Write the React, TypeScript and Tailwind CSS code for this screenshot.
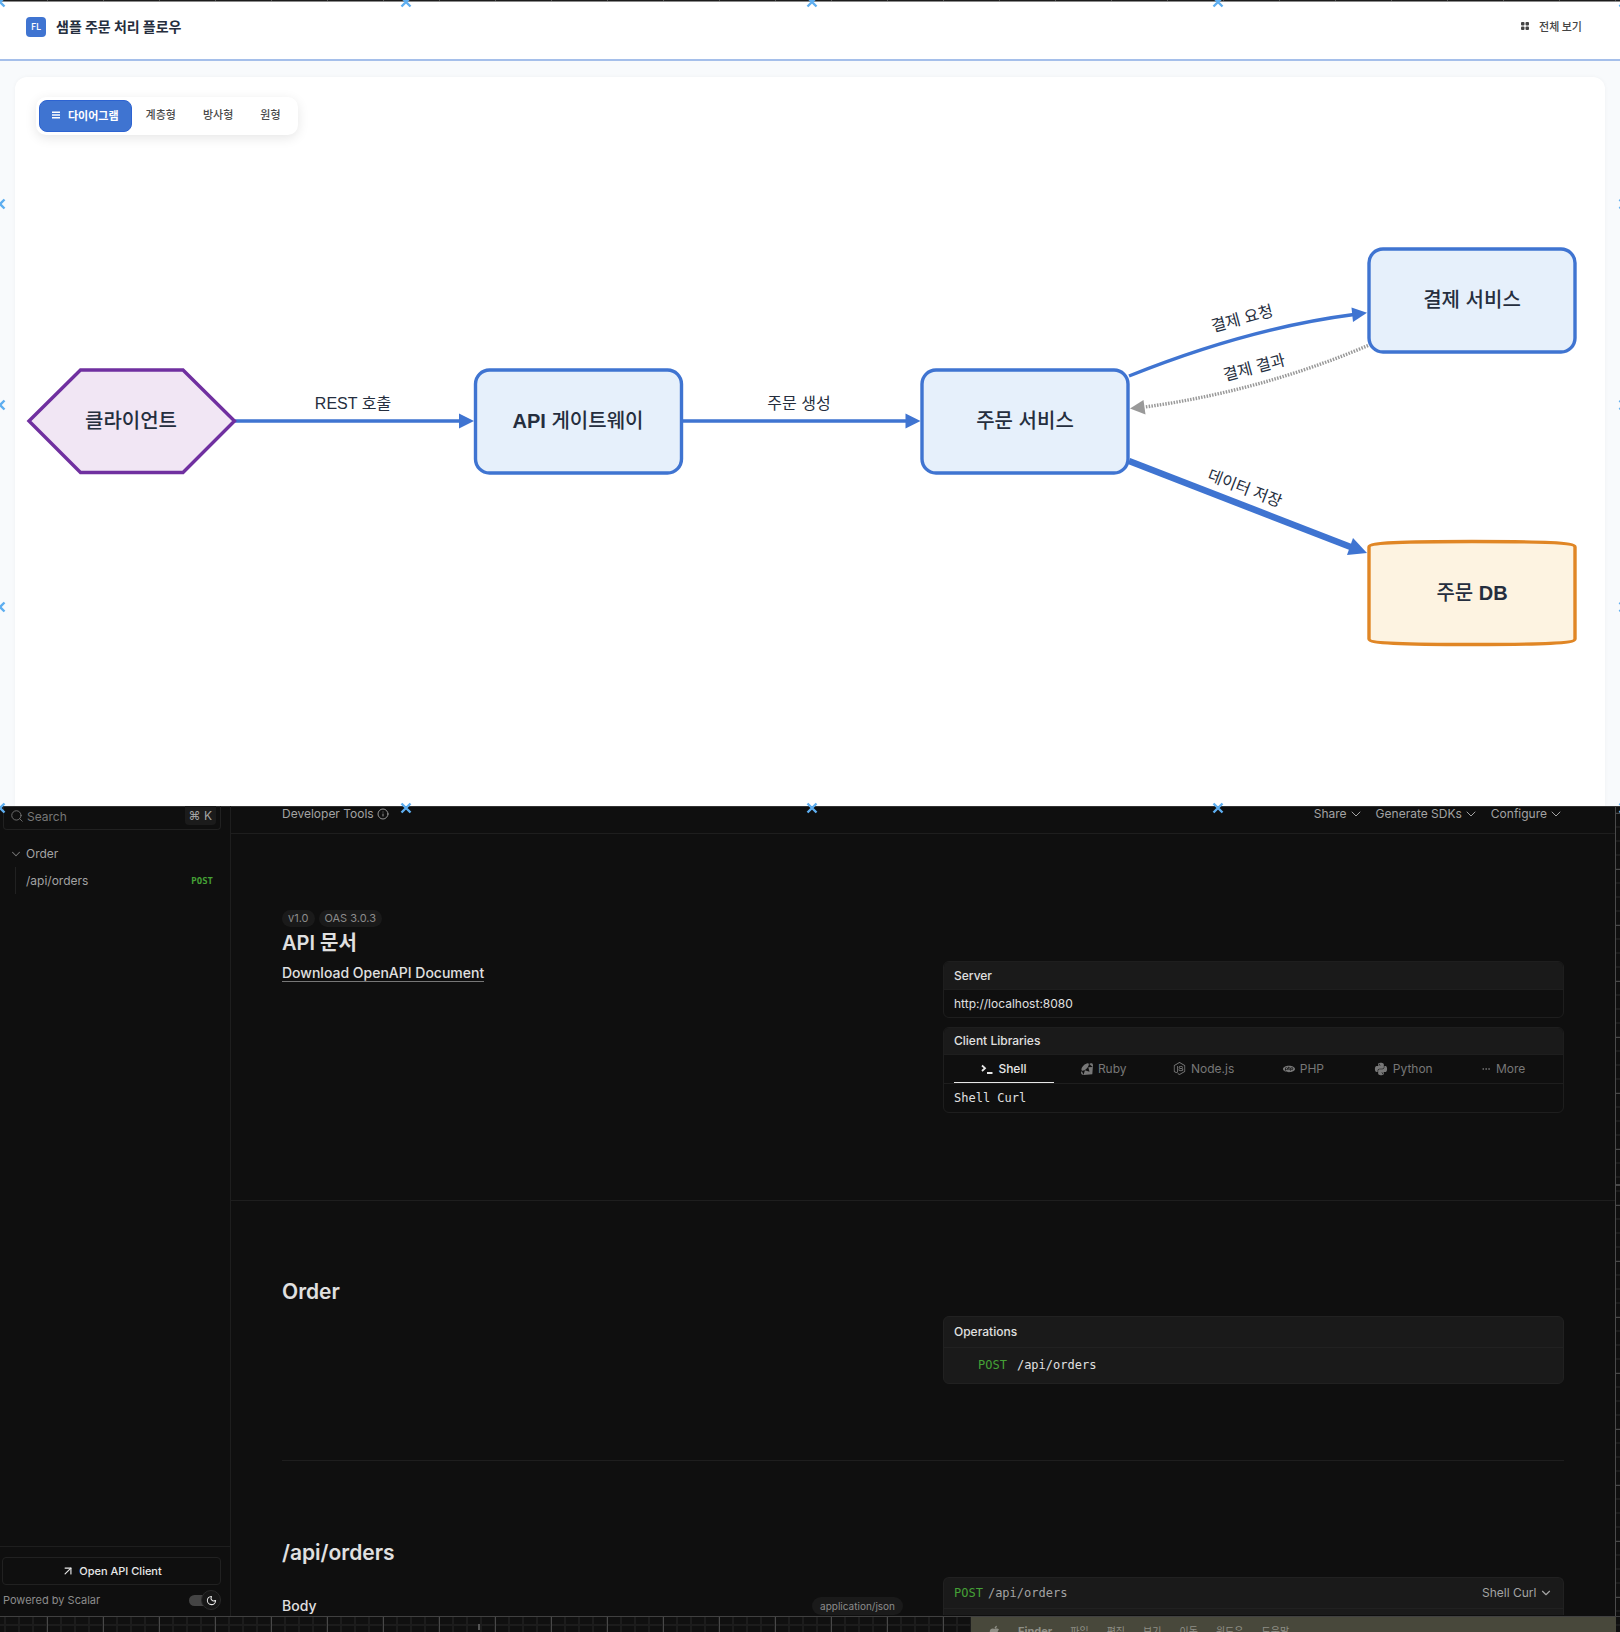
import { Search, ChevronDown, Info, ArrowUpRight, Moon, Ellipsis } from "lucide-react";
import { FaNodeJs, FaPython, FaApple } from "react-icons/fa";
import { SiRuby, SiPhp } from "react-icons/si";

const BLUE = "#3f74d1";

function Cross() {
  return (
    <span className="flex h-0 w-0 items-center justify-center">
      <svg width="12" height="12" viewBox="-6 -6 12 12" className="shrink-0">
        <path d="M-4.5-4.5 4.5 4.5M4.5-4.5-4.5 4.5" stroke="#5eaef0" strokeWidth="2.4" fill="none" />
      </svg>
    </span>
  );
}

/* Registration marks laid over the canvas edges */
function Marks() {
  return (
    <div aria-hidden className="pointer-events-none absolute top-0.5 -right-1 -bottom-0.5 left-0 z-10 flex flex-col justify-between">
      {[5, 2, 2, 2, 5].map((count, row) => (
        <div key={row} className="flex justify-between">
          {Array.from({ length: count }, (_, i) => (
            <Cross key={i} />
          ))}
        </div>
      ))}
    </div>
  );
}

function Diagram() {
  return (
    <svg
      viewBox="15 77 1590 729"
      className="block h-auto w-full font-['Liberation_Sans','Noto_Sans_CJK_KR',sans-serif]"
      role="img"
      aria-label="주문 처리 다이어그램"
    >
      <g fill="none" stroke={BLUE} strokeWidth="3.4">
        <path d="M235 421H461M683 421H907" />
        <path d="M1129 376Q1249 328 1354 314.5" />
        <path d="M1129 461 1352 547.5" strokeWidth="6.6" />
        <path d="M1368 345.5Q1261 391 1145 407" stroke="#999" strokeDasharray="1.5 1.3" />
      </g>
      <g fill={BLUE}>
        <path d="M459 413.5 474 421 459 428.5Z" />
        <path d="M905.5 413.5 920.5 421 905.5 428.5Z" />
        <path d="M1351.5 307.5 1367 312.7 1353 322Z" />
        <path d="M1353 538 1367 553 1347 555Z" />
        <path d="M1130 408.5 1143.5 400 1145.5 414.5Z" fill="#999" />
      </g>
      <g fill="#e6f0fb" stroke={BLUE} strokeWidth="3.4">
        <rect x="475.500" y="370" width="206" height="103" rx="14" />
        <rect x="922" y="370" width="206" height="103" rx="14" />
        <rect x="1369" y="249" width="206" height="103" rx="14" />
      </g>
      <path d="M29 421 80.5 370H183L234.5 421 183 472.5H80.5Z" fill="#f1e6f4" stroke="#7030a0" strokeWidth="3.4" />
      <path
        d="M1369 547C1369 543 1400 541.5 1472 541.5S1575 543 1575 547V639C1575 643 1544 644.5 1472 644.5S1369 643 1369 639Z"
        fill="#fdf3e1"
        stroke="#e08625"
        strokeWidth="3.4"
      />
      <g className="fill-[#252e3e] text-[20px] font-medium" textAnchor="middle">
        <text x="131" y="428">클라이언트</text>
        <text x="578" y="428"><tspan className="font-bold">API</tspan> 게이트웨이</text>
        <text x="1025" y="428">주문 서비스</text>
        <text x="1472" y="307">결제 서비스</text>
        <text x="1472" y="600">주문 <tspan className="font-bold">DB</tspan></text>
      </g>
      <g className="fill-[#252e3e] text-[16px]" textAnchor="middle">
        <text x="353" y="409">REST 호출</text>
        <text x="799" y="409">주문 생성</text>
        <text transform="translate(1242 318) rotate(-15)" y="6">결제 요청</text>
        <text transform="translate(1254 367) rotate(-15)" y="6">결제 결과</text>
        <text transform="translate(1245 488) rotate(21)" y="6">데이터 저장</text>
      </g>
    </svg>
  );
}

function FlowView() {
  return (
    <section className="relative bg-[#f8fafc] font-['Noto_Sans_CJK_KR',sans-serif]">
      <div className="h-0.5 border-b border-[#8a8a8a] bg-[#1c1c1c] bg-[repeating-linear-gradient(to_right,transparent_0_47px,#555_47px_48px,transparent_48px_56px)]" />
      <header className="flex h-[59px] items-start justify-between border-b-2 border-[#a5bfea] bg-white pt-3.5 pr-[38px] pl-[26px]">
        <div className="flex h-[22px] items-center gap-2.5">
          <span className="flex size-5 items-center justify-center rounded-sm bg-[#3f74d1] text-[9px] font-medium text-white">FL</span>
          <h1 className="pb-0.5 text-[14px] leading-5 font-bold text-[#252e3e]">샘플 주문 처리 플로우</h1>
        </div>
        <button className="flex h-5 items-center gap-2.5 text-[11px] font-medium text-[#444]">
          <svg width="8" height="8" viewBox="0 0 8 8" fill="currentColor">
            <rect width="3.5" height="3.5" rx="1" />
            <rect x="4.5" width="3.5" height="3.5" rx="1" />
            <rect y="4.5" width="3.5" height="3.5" rx="1" />
            <rect x="4.5" y="4.5" width="3.5" height="3.5" rx="1" />
          </svg>
          전체 보기
        </button>
      </header>
      <div className="px-[15px] pt-4">
        <div className="relative rounded-t-xl bg-white shadow-[0_0_4px_rgba(15,23,42,0.04)]">
          <Diagram />
          <nav className="absolute top-5 left-[21px] flex rounded-[10px] bg-white p-[3px] text-[11px] font-medium text-[#4a4a4a] shadow-[0_3px_12px_rgba(0,0,0,0.1)]">
            <button className="flex h-8 items-center gap-2 rounded-lg border border-[#2d63d2] bg-[#3f74d1] px-3 pb-0.5 font-bold text-white">
              <svg width="8" height="8" viewBox="0 0 8 8" fill="currentColor">
                <path d="M0 .5h8v1.5H0zM0 3.2h8v1.5H0zM0 6h8v1.5H0z" />
              </svg>
              다이어그램
            </button>
            <button className="px-3.5 pb-[3px]">계층형</button>
            <button className="px-[13px] pb-[3px]">방사형</button>
            <button className="px-3.5 pb-[3px]">원형</button>
          </nav>
        </div>
      </div>
      <Marks />
    </section>
  );
}

const menus = ["Share", "Generate SDKs", "Configure"];

const libraries = [
  {
    name: "Shell",
    icon: (
      <svg width="12" height="12" viewBox="0 0 12 12" fill="none" stroke="currentColor" strokeWidth="1.8">
        <path d="M1 2.5 4 5.2 1 8M6 10h5.5" />
      </svg>
    ),
  },
  { name: "Ruby", icon: <SiRuby size={12} /> },
  { name: "Node.js", icon: <FaNodeJs size={13} /> },
  { name: "PHP", icon: <SiPhp size={12} /> },
  { name: "Python", icon: <FaPython size={14} /> },
  { name: "More", icon: <Ellipsis size={10} /> },
];

function Sidebar() {
  return (
    <aside className="flex w-[231px] shrink-0 flex-col border-r border-[#1e1e1e] text-[#a3a3a3]">
      <div className="mr-[9px] ml-[3px] flex h-6 items-start gap-[3px] rounded-b-sm border-x border-b border-[#212121] pr-1 pl-1.5">
        <Search size={14} strokeWidth={1.5} className="mt-[3px] shrink-0 text-[#777]" />
        <input
          aria-label="Search"
          placeholder="Search"
          className="h-[21px] w-0 min-w-0 grow bg-transparent text-xs outline-none placeholder:text-[#777]"
        />
        <kbd className="h-[19px] rounded-b-sm bg-[#1b1b1b] px-1 font-[Inter,'DejaVu_Sans',sans-serif] text-xs leading-5">⌘ K</kbd>
      </div>
      <nav className="mt-[11px]">
        <button className="flex h-[26px] w-full items-center gap-[3px] pl-[9px]">
          <ChevronDown size={14} strokeWidth={1.8} className="text-[#777]" />
          Order
        </button>
        <a href="#orders" className="ml-[15px] flex h-[27px] items-center justify-between border-l border-[#212121] pr-[17px] pl-2.5">
          /api/orders
          <span className="font-['DejaVu_Sans_Mono',monospace] text-[9px] font-bold text-[#45a136]">POST</span>
        </a>
      </nav>
      <div className="mt-auto border-t border-[#1e1e1e] pt-2.5 pr-[9px] pb-1.5 pl-0.5">
        <button className="flex h-7 w-full items-center justify-center gap-1 rounded border border-[#212121] text-[11px] font-medium text-[#e7e7e7]">
          <ArrowUpRight size={14} strokeWidth={2} />
          Open API Client
        </button>
        <div className="mt-[5px] flex h-5 items-center justify-between">
          <a href="#scalar" className="pl-px text-[11px] text-[#8c8c8c]">Powered by Scalar</a>
          <label className="relative flex h-5 w-8 items-center">
            <input type="checkbox" role="switch" defaultChecked aria-label="Dark mode" className="h-[11px] w-6 appearance-none rounded-full bg-[#444]" />
            <span className="pointer-events-none absolute right-0 flex size-5 items-center justify-center rounded-full border border-[#2a2a2a] bg-[#161616] text-[#e7e7e7]">
              <Moon size={11} strokeWidth={2.2} />
            </span>
          </label>
        </div>
      </div>
    </aside>
  );
}

function Docs() {
  return (
    <main className="min-w-0 grow text-[#e0e0e0]">
      <div className="flex h-7 items-start justify-between border-b border-[#1e1e1e] px-[51px] text-[#a3a3a3]">
        <span className="flex h-[15px] items-center gap-[3px]">
          Developer Tools
          <Info size={12} strokeWidth={1.8} />
        </span>
        <div className="flex gap-3">
          {menus.map((m) => (
            <button key={m} className="flex h-[15px] items-center gap-px">
              {m}
              <ChevronDown size={16} strokeWidth={1.5} />
            </button>
          ))}
        </div>
      </div>

      <section className="grid grid-cols-2 gap-10 border-b border-[#1e1e1e] px-[51px] pt-[76px] pb-[87px]">
        <div>
          <div className="flex gap-1 text-[11px] leading-[17px] text-[#8c8c8c]">
            <span className="rounded-full bg-[#1a1a1a] px-[6px]">v1.0</span>
            <span className="rounded-full bg-[#1a1a1a] px-[6px]">OAS 3.0.3</span>
          </div>
          <h2 className="mt-1 text-[20px] leading-6 font-semibold">API 문서</h2>
          <a href="#openapi" className="mt-2.5 inline-block border-b border-[#777] text-[14px] leading-4 font-medium">
            Download OpenAPI Document
          </a>
        </div>
        <div className="flex flex-col gap-[9px] pt-[51px]">
          <div className="overflow-hidden rounded-md border border-[#1e1e1e]">
            <h3 className="border-b border-[#1e1e1e] bg-[#1a1a1a] px-2.5 leading-[27px] font-medium">Server</h3>
            <p className="px-2.5 leading-[27px]">http://localhost:8080</p>
          </div>
          <div className="overflow-hidden rounded-md border border-[#1e1e1e]">
            <h3 className="border-b border-[#1e1e1e] bg-[#1a1a1a] px-2.5 leading-[26px] font-medium">Client Libraries</h3>
            <div role="tablist" className="grid grid-cols-6 border-b border-[#1e1e1e] px-2.5 text-[#777]">
              {libraries.map(({ name, icon }, i) => (
                <button
                  key={name}
                  role="tab"
                  aria-selected={i === 0}
                  className="flex h-7 items-center justify-center gap-[5px] border-b border-transparent aria-selected:border-[#e7e7e7] aria-selected:font-medium aria-selected:text-[#e7e7e7]"
                >
                  {icon}
                  {name}
                </button>
              ))}
            </div>
            <p className="px-2.5 font-['DejaVu_Sans_Mono',monospace] leading-7">Shell Curl</p>
          </div>
        </div>
      </section>

      <section className="px-[51px] pt-[79px]">
        <h2 className="text-[21px] leading-6 font-semibold">Order</h2>
        <div className="grid grid-cols-2 gap-10 border-b border-[#1e1e1e] pt-3 pb-[76px]">
          <div className="col-start-2 rounded-md border border-[#212121] bg-[#1a1a1a]">
            <h3 className="border-b border-[#212121] px-2.5 leading-[30px] font-medium">Operations</h3>
            <a href="#orders" className="flex gap-2.5 px-[34px] font-['DejaVu_Sans_Mono',monospace] leading-[35px]">
              <span className="text-[#45a136]">POST</span>
              /api/orders
            </a>
          </div>
        </div>
      </section>

      <section id="orders" className="px-[51px] pt-20">
        <h2 className="text-[21px] leading-6 font-semibold">/api/orders</h2>
        <div className="grid grid-cols-2 gap-10 pt-3">
          <div className="mt-5 flex h-[18px] items-center justify-between">
            <h3 className="text-[14px] font-medium">Body</h3>
            <span className="rounded-full bg-[#1a1a1a] px-2 text-[10px] leading-[18px] text-[#8c8c8c]">application/json</span>
          </div>
          <div className="h-[38px] rounded-t-md border-x border-t border-[#212121] bg-[#1a1a1a]">
            <div className="flex h-[31px] items-center justify-between border-b border-[#212121] px-2.5 text-[#a3a3a3]">
              <span className="flex gap-[5px] font-['DejaVu_Sans_Mono',monospace]">
                <span className="text-[#45a136]">POST</span>
                /api/orders
              </span>
              <span className="flex items-center gap-0.5">
                <select aria-label="Client" className="appearance-none bg-transparent">
                  <option>Shell Curl</option>
                </select>
                <ChevronDown size={14} strokeWidth={2} />
              </span>
            </div>
          </div>
        </div>
      </section>
    </main>
  );
}

function Ruler() {
  return (
    <div
      aria-hidden
      className="w-[5px] shrink-0 border-l border-[#4a4a4a] bg-[repeating-linear-gradient(to_bottom,transparent_0_6px,#484848_6px_7px,transparent_7px_56px),repeating-linear-gradient(to_bottom,transparent_0_5px,#1c1c1c_5px_7px,transparent_7px_14px)] pt-[377px]"
    >
      <div className="h-0.5 bg-[#484848]" />
    </div>
  );
}

function MenuBar() {
  return (
    <footer className="flex h-4 justify-end overflow-hidden border-t border-[#404040] bg-[#101010] bg-[repeating-linear-gradient(to_right,transparent_0_47px,#484848_47px_48px,transparent_48px_56px),repeating-linear-gradient(to_right,transparent_0_4px,#1c1c1c_4px_6px,transparent_6px_14px),linear-gradient(to_bottom,transparent_0_7px,#1c1c1c_7px_9px,transparent_9px)] pr-1">
      <div className="flex grow justify-center pr-3.5">
        <span className="mt-[7px] h-1.5 w-0.5 bg-[#555]" />
      </div>
      <nav className="flex w-[645px] items-start gap-[18px] bg-[#48483b] pt-1.5 pl-[17px] font-[Inter,'Noto_Sans_CJK_KR',sans-serif] text-[10px] leading-4 text-[#8f8f86]">
        <FaApple size={13} className="mt-0.5 shrink-0" />
        <span className="-ml-px text-[11px] font-bold">Finder</span>
        {["파일", "편집", "보기", "이동", "윈도우", "도움말"].map((item) => (
          <span key={item}>{item}</span>
        ))}
      </nav>
    </footer>
  );
}

export default function App() {
  return (
    <div className="flex min-h-screen flex-col overflow-hidden bg-[#0f0f0f]">
      <FlowView />
      <div className="flex grow border-t border-[#333] font-[Inter,'Noto_Sans_CJK_KR',sans-serif] text-xs">
        <div className="-mt-px flex min-w-0 grow">
          <Sidebar />
          <Docs />
        </div>
        <Ruler />
      </div>
      <MenuBar />
    </div>
  );
}
